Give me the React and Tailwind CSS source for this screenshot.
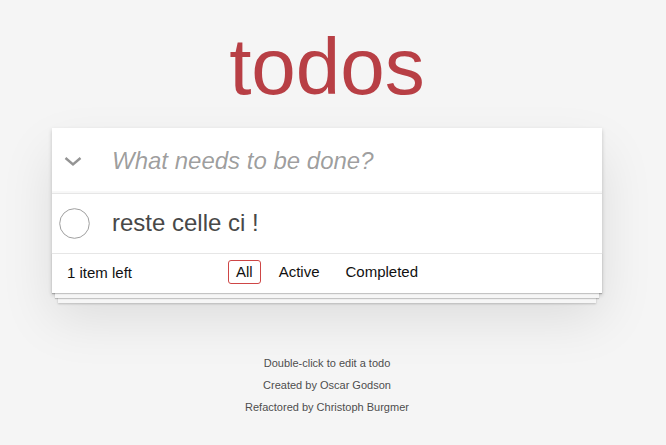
export default function App() {
  return (
    <div className="min-h-screen bg-[#f5f5f5] pr-[12px] font-['Liberation_Sans',Arial,sans-serif] text-[14px] leading-[19.6px] text-[#111]">
      <div className="mx-auto w-[550px]">
        <h1 className="pt-[27px] text-center text-[80px] leading-[80px] font-normal text-[#b83f45]">todos</h1>
        <section className="mt-[21px] bg-white shadow-[0_2px_4px_0_rgba(0,0,0,0.2),0_25px_50px_0_rgba(0,0,0,0.1)]">
          <header className="flex h-[65px] items-center shadow-[inset_0_-2px_1px_rgba(0,0,0,0.03)]">
            <div className="flex w-[60px] items-center justify-start pl-[12px]">
              <svg width="18" height="12" viewBox="0 0 18 12">
                <polyline points="1.5,3 9,9.5 16.5,3" fill="none" stroke="#949494" strokeWidth="2.4" />
              </svg>
            </div>
            <input
              className="h-full flex-1 bg-transparent pr-4 text-[24px] leading-[33.6px] text-[#111] outline-none placeholder:italic placeholder:text-black/40"
              placeholder="What needs to be done?"
            />
          </header>
          <ul className="border-t border-[#e6e6e6]">
            <li className="flex h-[58.8px] items-center">
              <div className="flex w-[60px] justify-start pl-[7px]">
                <svg width="31" height="31" viewBox="0 0 31 31">
                  <circle cx="15.5" cy="15.5" r="14.8" fill="none" stroke="#949494" strokeWidth="0.9" />
                </svg>
              </div>
              <span className="text-[24px] leading-[28.8px] text-[#484848]">reste celle ci !</span>
            </li>
          </ul>
          <footer className="relative flex h-[40px] items-center border-t border-[#e6e6e6] px-[15px] text-[15px] shadow-[0_1px_1px_rgba(0,0,0,0.2),0_8px_0_-3px_#f6f6f6,0_9px_1px_-3px_rgba(0,0,0,0.2),0_16px_0_-6px_#f6f6f6,0_17px_2px_-6px_rgba(0,0,0,0.2)]">
            <span className="leading-[20px]">1 item left</span>
            <ul className="absolute inset-x-0 top-[6px] flex justify-center gap-[4px]">
              <li>
                <a className="mx-[3px] block rounded-[3px] border border-[#ce4646] px-[7px] py-[3px] leading-[16px]">All</a>
              </li>
              <li>
                <a className="mx-[3px] block rounded-[3px] border border-transparent px-[7px] py-[3px] leading-[16px]">Active</a>
              </li>
              <li>
                <a className="mx-[3px] block rounded-[3px] border border-transparent px-[7px] py-[3px] leading-[16px]">Completed</a>
              </li>
            </ul>
          </footer>
        </section>
        <div className="mt-[65px] flex flex-col items-center gap-[11px] text-[11px] leading-[11px] text-[#4d4d4d] [text-shadow:0_1px_0_rgba(255,255,255,0.5)]">
          <p>Double-click to edit a todo</p>
          <p>Created by Oscar Godson</p>
          <p>Refactored by Christoph Burgmer</p>
        </div>
      </div>
    </div>
  );
}
